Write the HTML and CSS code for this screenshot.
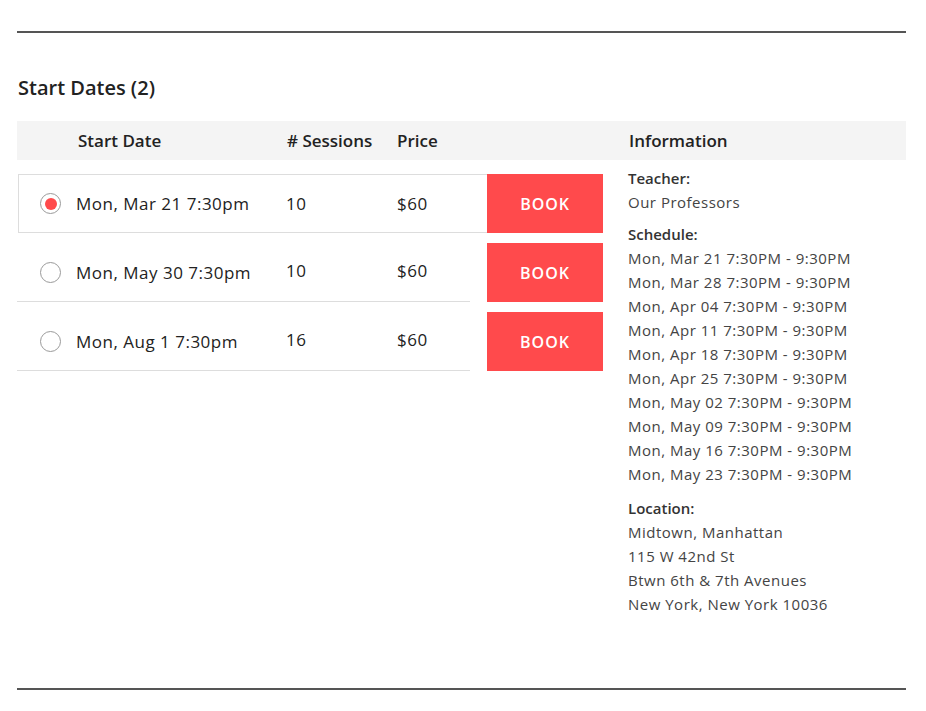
FILE: index.html
```html
<!DOCTYPE html>
<html>
<head>
<meta charset="utf-8">
<link rel="stylesheet" href="styles.css">
</head>
<body>
<div class="page">
  <div class="rule"></div>
  <h2 class="title">Start Dates (2)</h2>
  <div class="thead">
    <div class="th th-date">Start Date</div>
    <div class="th th-sessions"># Sessions</div>
    <div class="th th-price">Price</div>
    <div class="th th-info">Information</div>
  </div>
  <div class="tbody">
    <div class="rows">
      <div class="row selected">
        <div class="main">
          <span class="radio checked"></span>
          <span class="date">Mon, Mar 21 7:30pm</span>
          <span class="sessions">10</span>
          <span class="price">$60</span>
        </div>
        <button class="book">BOOK</button>
      </div>
      <div class="row">
        <div class="main">
          <span class="radio"></span>
          <span class="date">Mon, May 30 7:30pm</span>
          <span class="sessions raised">10</span>
          <span class="price raised">$60</span>
        </div>
        <button class="book">BOOK</button>
      </div>
      <div class="row">
        <div class="main">
          <span class="radio"></span>
          <span class="date">Mon, Aug 1 7:30pm</span>
          <span class="sessions raised">16</span>
          <span class="price raised">$60</span>
        </div>
        <button class="book">BOOK</button>
      </div>
    </div>
    <div class="info">
      <div class="group">
        <div class="label">Teacher:</div>
        <div class="val">Our Professors</div>
      </div>
      <div class="group">
        <div class="label">Schedule:</div>
        <div class="val">Mon, Mar 21 7:30PM - 9:30PM</div>
        <div class="val">Mon, Mar 28 7:30PM - 9:30PM</div>
        <div class="val">Mon, Apr 04 7:30PM - 9:30PM</div>
        <div class="val">Mon, Apr 11 7:30PM - 9:30PM</div>
        <div class="val">Mon, Apr 18 7:30PM - 9:30PM</div>
        <div class="val">Mon, Apr 25 7:30PM - 9:30PM</div>
        <div class="val">Mon, May 02 7:30PM - 9:30PM</div>
        <div class="val">Mon, May 09 7:30PM - 9:30PM</div>
        <div class="val">Mon, May 16 7:30PM - 9:30PM</div>
        <div class="val">Mon, May 23 7:30PM - 9:30PM</div>
      </div>
      <div class="group">
        <div class="label">Location:</div>
        <div class="val">Midtown, Manhattan</div>
        <div class="val">115 W 42nd St</div>
        <div class="val">Btwn 6th &amp; 7th Avenues</div>
        <div class="val">New York, New York 10036</div>
      </div>
    </div>
  </div>
  <div class="rule bottom"></div>
</div>
</body>
</html>
```

FILE: styles.css
```css
* { box-sizing: border-box; }
html, body { margin: 0; padding: 0; background: #fff; }
body {
  font-family: "Open Sans", "Liberation Sans", sans-serif;
  color: #222;
}
.page {
  width: 889px;
  margin-left: 17px;
  padding-top: 31px;
}
.rule {
  height: 2px;
  background: #555;
}
.rule.bottom { margin-top: 70px; }
.title {
  margin: 42px 0 0 1px;
  font-size: 20px;
  font-weight: 600;
  line-height: 26px;
  color: #222;
}
.thead {
  margin-top: 20px;
  height: 39px;
  background: #f4f4f4;
  display: flex;
  align-items: center;
  font-size: 17px;
  font-weight: 600;
  color: #222;
}
.th-date { margin-left: 61px; width: 209px; }
.th-sessions { width: 110px; }
.th-price { width: 232px; }
.tbody {
  display: flex;
  align-items: flex-start;
}
.rows {
  width: 586px;
  padding-top: 14px;
  display: flex;
  flex-direction: column;
  gap: 10px;
}
.row {
  display: flex;
  height: 59px;
}
.main {
  width: 453px;
  margin-right: 17px;
  border-bottom: 1px solid #ddd;
  display: flex;
  align-items: center;
  font-size: 17px;
  color: #222;
  letter-spacing: 0.5px;
}
.main > span { flex: none; }
.row.selected .main {
  width: 470px;
  margin-right: 0;
  margin-left: 1px;
  border: 1px solid #ddd;
  border-right: none;
}
.radio {
  width: 21px;
  height: 21px;
  border: 1.5px solid #9a9a9a;
  border-radius: 50%;
  margin-left: 23px;
  margin-right: 15px;
  display: flex;
  align-items: center;
  justify-content: center;
}
.row.selected .radio { margin-left: 21px; }
.radio.checked::after {
  content: "";
  width: 12px;
  height: 12px;
  border-radius: 50%;
  background: #ff4a4c;
}
.date { width: 210px; }
.sessions { width: 111px; }
.price { width: 60px; }
.raised { position: relative; top: -2px; }
.book {
  width: 116px;
  height: 59px;
  border: none;
  background: #ff4a4c;
  color: #fff;
  font-family: inherit;
  font-size: 16px;
  font-weight: 600;
  letter-spacing: 1px;
  padding: 0;
}
.info {
  margin-left: 25px;
  padding-top: 7px;
  font-size: 15px;
  line-height: 24px;
}
.group + .group { margin-top: 8px; }
.group:last-child { margin-top: 10px; }
.label { font-weight: 600; color: #333; line-height: 23px; }
.val { color: #444; letter-spacing: 0.5px; }
.group + .group .label { line-height: 24px; }
.rule.bottom { margin-top: 72px; }
```
